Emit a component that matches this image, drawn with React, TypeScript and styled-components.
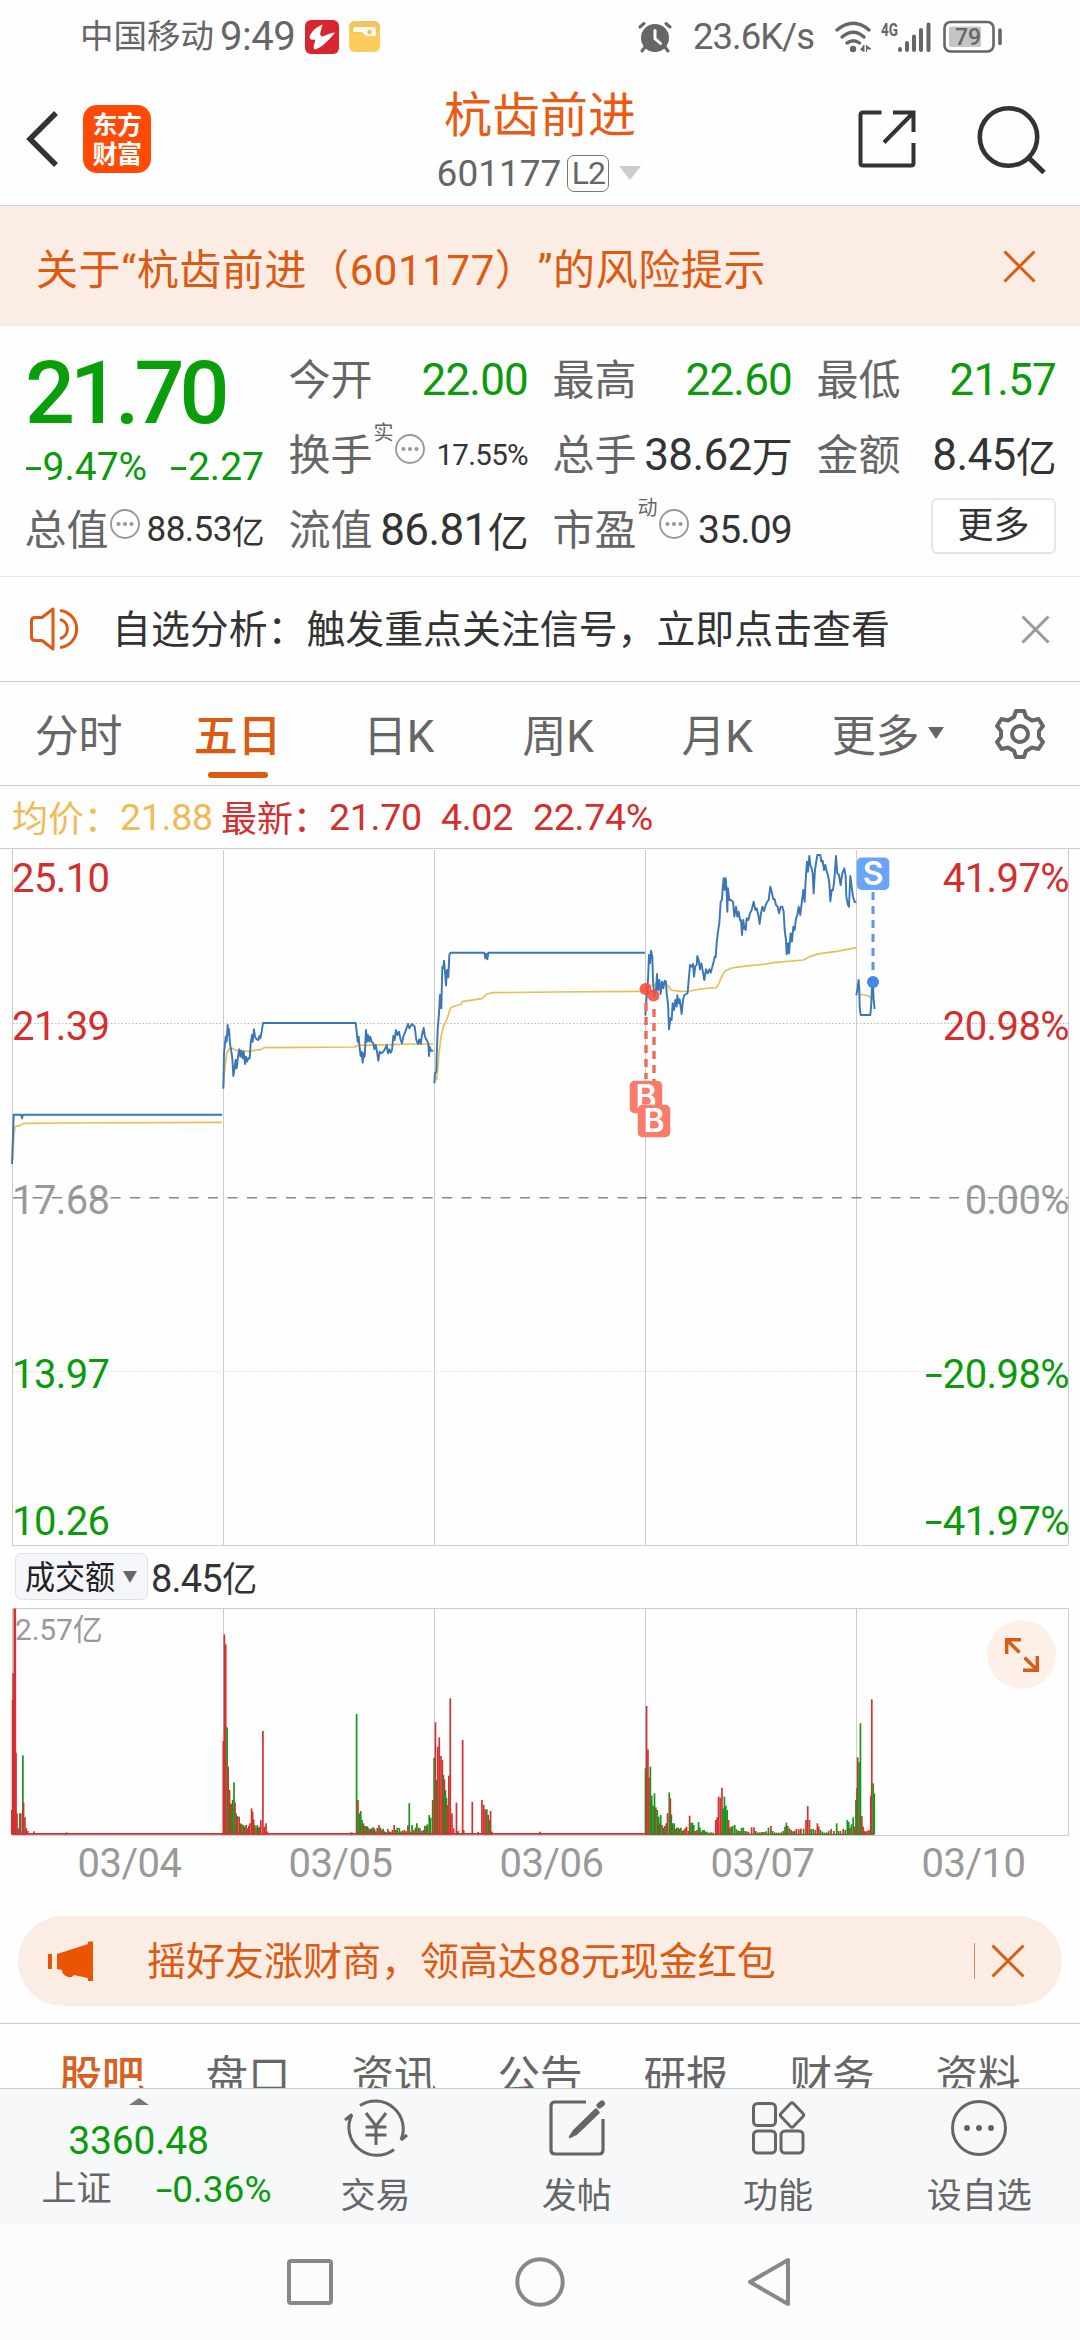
import React from 'react';
import styled, { createGlobalStyle } from 'styled-components';

const C = {
  green: '#0b9a0b',
  red: '#d32f2f',
  orange: '#dc5a12',
  gray: '#666',
  dark: '#333',
  light: '#999',
  line: '#ccc',
  peach: '#fcede4',
  blue: '#3a76b8',
  yellow: '#eebb55',
};

const Global = createGlobalStyle`
  * { box-sizing: border-box; }
  body { margin: 0; background: #fefefe; }
`;

const Page = styled.div`
  width: 1080px;
  height: 2340px;
  overflow: hidden;
  display: flex;
  flex-direction: column;
  background: #fefefe;
  color: ${C.dark};
  font-family: Roboto, 'Noto Sans CJK SC', sans-serif;
  text-spacing-trim: space-all;
  white-space: nowrap;
`;

const Text = styled.span<{ $size: number; $color?: string; $ls?: number; $weight?: number; $ml?: number }>`
  font-size: ${(p) => p.$size}px;
  color: ${(p) => p.$color ?? 'inherit'};
  letter-spacing: ${(p) => p.$ls ?? 0}px;
  font-weight: ${(p) => p.$weight ?? 400};
  margin-left: ${(p) => p.$ml ?? 0}px;
`;

/* A hyphen stretched to the width of a figure-style minus sign. */
const Minus = styled.span`
  display: inline-block;
  width: 0.45em;
  letter-spacing: 0;
  transform: scaleX(1.6);
  transform-origin: 0 50%;
`;

/* ---------- status bar ---------- */
const StatusBar = styled.div`
  height: 72px;
  flex: none;
  display: flex;
  align-items: center;
  justify-content: space-between;
  padding: 1px 77px 0 80px;
  color: ${C.gray};
`;
const StatusGroup = styled.div`
  display: flex;
  align-items: center;
  line-height: 40px;
`;
const StatusSvg = styled.svg<{ $ml: number }>`
  display: block;
  flex: none;
  margin-left: ${(p) => p.$ml}px;
`;

const AlarmIcon = () => (
  <StatusSvg $ml={0} width="34" height="32" viewBox="0 0 34 32">
    <g stroke={C.gray} strokeWidth="3" strokeLinecap="round" fill="none">
      <path d="M2 6 L6 2.5 M32 6 L28 2.5 M7 26 L4 30 M27 26 L30 30" />
    </g>
    <circle cx="17" cy="17" r="14" fill={C.gray} />
    <path d="M17 9.5 V17.5 L22.5 22.5" fill="none" stroke="#fff" strokeWidth="3" strokeLinecap="round" />
  </StatusSvg>
);
const WifiIcon = () => (
  <StatusSvg $ml={21} width="38" height="32" viewBox="0 0 38 32">
    <g fill="none" stroke={C.gray} strokeWidth="3.4" strokeLinecap="round">
      <path d="M2 9 Q18.500 -4.500 34 9" />
      <path d="M7 16 Q18.500 6.500 29 16" />
      <path d="M12 22 Q18.500 17.500 24.500 22" />
    </g>
    <circle cx="18" cy="28" r="3.200" fill={C.gray} />
    <path d="M25.500 29 L29 24 V31 M31.500 31 V24.500 L36 28 H32" fill={C.gray} stroke={C.gray} strokeWidth="1" />
  </StatusSvg>
);
const SignalIcon = () => (
  <StatusSvg $ml={8} width="50" height="32" viewBox="0 0 50 32">
    <text x="0" y="14.500" fontSize="18" fontWeight="700" textLength="17" lengthAdjust="spacingAndGlyphs" fill={C.gray} fontFamily="Roboto, sans-serif">4G</text>
    <g stroke={C.gray} strokeWidth="4" strokeLinecap="round">
      <path d="M19 28 V29 M26 22 V29 M33 15.500 V29 M40 9 V29 M47.500 3.500 V29" />
    </g>
  </StatusSvg>
);
const BatteryIcon = () => (
  <StatusSvg $ml={12} width="60" height="34" viewBox="0 0 60 34">
    <rect x="1.500" y="2" width="49" height="29.500" rx="6" fill="none" stroke={C.gray} strokeWidth="2.600" />
    <rect x="6" y="6.500" width="32" height="20.500" rx="2" fill="#c4c4c4" />
    <text x="25" y="25" textAnchor="middle" fontSize="23" fill={C.gray} fontWeight="500" fontFamily="Roboto, sans-serif">79</text>
    <path d="M57 10 V23.500" stroke={C.gray} strokeWidth="3.600" strokeLinecap="round" />
  </StatusSvg>
);
const StockBadge = () => (
  <StatusSvg $ml={10} width="34" height="34" viewBox="0 0 34 34">
    <rect width="34" height="34" rx="6" fill="#d7262f" />
    <path d="M17.500 4.500 C12 7 7 10 4.500 17 C5 20 7 20 10 19.500 C11 22 7 26 9.500 29.500 C14 29 22 23 30 12.500 C26 12.500 21 15.500 17 16.500 C13 15 17 9 17.500 4.500Z" fill="#fff" />
  </StatusSvg>
);
const FilesBadge = () => (
  <StatusSvg $ml={10} width="31" height="31" viewBox="0 0 31 31">
    <rect width="31" height="31" rx="6" fill="#fbcb5c" />
    <rect y="0" width="31" height="12" rx="6" fill="#f3c35d" />
    <path d="M4 8.500 Q4 6 6.500 6 H24 Q27 6 27 9 V15 H19 Q16 15 14.500 12.500 Q13.500 11 11.500 11 H4Z" fill="#fffaf0" />
    <circle cx="20.500" cy="11" r="2.200" fill="#f0bc4c" />
  </StatusSvg>
);

/* ---------- header ---------- */
const Header = styled.header`
  height: 134px;
  flex: none;
  display: grid;
  grid-template-columns: 300px 1fr 300px;
  border-bottom: 1px solid ${C.line};
`;
const HeaderSide = styled.div<{ $right?: boolean }>`
  display: flex;
  align-items: center;
  justify-content: ${(p) => (p.$right ? 'flex-end' : 'flex-start')};
  padding: 0 ${(p) => (p.$right ? 34 : 0)}px 0 ${(p) => (p.$right ? 0 : 25)}px;
  gap: ${(p) => (p.$right ? 60 : 24)}px;
  svg { display: block; }
`;
const Logo = styled.div`
  width: 68px;
  height: 68px;
  border-radius: 14px;
  background: #ff4a05;
  color: #fff;
  display: grid;
  place-content: center;
  padding-bottom: 2px;
  font: 700 25px/29px 'Noto Sans CJK SC', sans-serif;
  letter-spacing: -0.5px;
  text-align: center;
`;
const HeaderTitle = styled.div`
  display: flex;
  flex-direction: column;
  align-items: center;
  padding-top: 14px;
`;
const StockName = styled.div`
  font-size: 48px;
  line-height: 60px;
  color: #ea5a12;
`;
const CodeRow = styled.div`
  display: flex;
  align-items: center;
  height: 38px;
  margin: 8px 2px 0 0;
  color: ${C.gray};
`;
const LevelTag = styled.span`
  width: 42px;
  height: 37px;
  margin-left: 6px;
  border: 1.500px solid #777;
  border-radius: 7px;
  font-size: 32px;
  line-height: 35px;
  text-align: center;
  letter-spacing: -1px;
`;
const Caret = styled.span<{ $w: number; $h: number; $color: string; $ml?: number; $up?: boolean }>`
  width: 0;
  height: 0;
  flex: none;
  margin-left: ${(p) => p.$ml ?? 0}px;
  border-left: ${(p) => p.$w / 2}px solid transparent;
  border-right: ${(p) => p.$w / 2}px solid transparent;
  ${(p) => (p.$up ? 'border-bottom' : 'border-top')}: ${(p) => p.$h}px solid ${(p) => p.$color};
`;

/* ---------- risk notice ---------- */
const Risk = styled.div`
  height: 120px;
  flex: none;
  display: flex;
  align-items: center;
  justify-content: space-between;
  padding: 0 44px 0 36px;
  background: ${C.peach};
  color: ${C.orange};
  font-size: 42px;
  letter-spacing: 0.6px;
`;
const Cross = ({ size, color, w = 3 }: { size: number; color: string; w?: number }) => (
  <svg width={size} height={size} viewBox={`0 0 ${size} ${size}`} display="block">
    <path d={`M1.500 1.500 L${size - 1.5} ${size - 1.5} M${size - 1.5} 1.500 L1.500 ${size - 1.5}`} stroke={color} strokeWidth={w} fill="none" />
  </svg>
);

/* ---------- quote ---------- */
const Quote = styled.section`
  height: 251px;
  flex: none;
  display: grid;
  grid-template-columns: repeat(4, 239px);
  column-gap: 25px;
  padding: 16px 24px 0 25px;
  border-bottom: 1px solid #e8e8e8;
`;
const QuoteCol = styled.div`
  display: flex;
  flex-direction: column;
`;
const Price = styled.div`
  height: 100px;
  line-height: 102px;
  font-size: 88px;
  font-weight: 500;
  letter-spacing: -5px;
  color: #0a9f0a;
`;
const Change = styled.div`
  height: 50px;
  display: flex;
  align-items: center;
  justify-content: space-between;
  font-size: 39px;
  color: ${C.green};
`;
const Cell = styled.div`
  height: 75px;
  display: flex;
  align-items: center;
  justify-content: space-between;
`;
const Label = styled.span`
  display: flex;
  align-items: center;
  margin: 0 0 7px -0.5px;
  font-size: 42px;
  color: ${C.gray};
`;
const Sup = styled.sup`
  font-size: 20px;
  line-height: 20px;
  margin: -36px 0 0 1px;
`;
const Value = styled.span<{ $size?: number; $up?: boolean; $ls?: number }>`
  display: flex;
  align-items: center;
  font-size: ${(p) => p.$size ?? 44}px;
  letter-spacing: ${(p) => p.$ls ?? -0.8}px;
  color: ${(p) => (p.$up ? C.green : C.dark)};
`;
const Unit = styled.span`
  font-size: 0.93em;
`;
const MoreButton = styled.button`
  align-self: flex-end;
  width: 125px;
  height: 56px;
  margin-top: 6px;
  padding: 0;
  border: 2px solid #e6e6e6;
  border-radius: 6px;
  background: #fff;
  color: ${C.dark};
  font: 400 36px/50px Roboto, 'Noto Sans CJK SC', sans-serif;
`;
const InfoSvg = styled.svg`
  display: block;
  margin-top: -4px;
`;
const InfoDot = () => (
  <InfoSvg width="32" height="32" viewBox="0 0 32 32">
    <circle cx="16" cy="16" r="14" fill="none" stroke="#999" strokeWidth="1.900" />
    <g fill="#999">
      <circle cx="9.500" cy="16" r="2.100" />
      <circle cx="16" cy="16" r="2.100" />
      <circle cx="22.500" cy="16" r="2.100" />
    </g>
  </InfoSvg>
);

/* ---------- analysis notice ---------- */
const Notice = styled.div`
  height: 105px;
  flex: none;
  display: flex;
  align-items: center;
  padding: 0 30px 0 29px;
  border-bottom: 1px solid ${C.line};
  font-size: 38.900px;
`;
const NoticeText = styled.span`
  flex: 1;
  margin: 0 0 7px 29px;
`;

/* ---------- period tabs ---------- */
const Tabs = styled.nav`
  height: 104px;
  flex: none;
  display: flex;
  align-items: center;
  border-bottom: 1px solid ${C.line};
  color: ${C.gray};
`;
const Tab = styled.div<{ $w: number; $active?: boolean }>`
  position: relative;
  width: ${(p) => p.$w}px;
  height: 100%;
  display: flex;
  align-items: center;
  justify-content: center;
  font-size: 44px;
  padding-bottom: 2px;
  letter-spacing: -0.2px;
  color: ${(p) => (p.$active ? C.orange : 'inherit')};
  font-weight: ${(p) => (p.$active ? 500 : 400)};
  &::after {
    content: '';
    display: ${(p) => (p.$active ? 'block' : 'none')};
    position: absolute;
    left: 50%;
    bottom: 7px;
    width: 60px;
    height: 6px;
    margin-left: -30px;
    border-radius: 3px;
    background: ${C.orange};
  }
`;
const GearSvg = styled.svg`
  display: block;
  margin-left: 14px;
`;

/* ---------- price chart ---------- */
const Legend = styled.div`
  height: 62px;
  flex: none;
  display: flex;
  align-items: center;
  padding-left: 12px;
  color: ${C.red};
  font-size: 37.500px;
`;
const LegendItem = styled.span<{ $w: number; $color?: string }>`
  width: ${(p) => p.$w}px;
  letter-spacing: -0.3px;
  color: ${(p) => p.$color ?? 'inherit'};
`;
const LegendLabel = styled.span<{ $w: number; $color?: string }>`
  width: ${(p) => p.$w}px;
  margin-bottom: 2px;
  font-size: 36px;
  color: ${(p) => p.$color ?? 'inherit'};
`;
const Chart = styled.div`
  position: relative;
  height: 698px;
  flex: none;
  svg { display: block; }
`;
const Axis = styled.div<{ $right?: boolean }>`
  position: absolute;
  top: 10px;
  bottom: 1px;
  ${(p) => (p.$right ? 'right: 11px' : 'left: 12px')};
  display: flex;
  flex-direction: column;
  align-items: ${(p) => (p.$right ? 'flex-end' : 'flex-start')};
`;
const Tick = styled.div<{ $tone: 'red' | 'green' | 'light'; $gap?: number }>`
  height: 42px;
  line-height: 42px;
  margin-top: ${(p) => p.$gap ?? 0}px;
  font-size: 40px;
  letter-spacing: -0.6px;
  color: ${(p) => C[p.$tone]};
`;

const dayLines = [223.5, 434.5, 645.5, 856.5];

const price = [
  '36,972 41,824 63,824 66,835 69,824 666,824',
  '670,746 672,640 675,610 677,590 680,605 683,555 686,585 687,567 690,612 693,628 697,655 700,708 703,690 707,660 710,685 714,650 718,628 721,650 724,632 728,655 731,635 735,672 738,650 741,665 745,655 749,655 752,610 756,585 758,605 762,568 765,590 770,598 775,600 778,588 781,595 785,575 789,549 1067,549 1070,575 1073,605 1076,590 1079,625 1082,648 1085,635 1088,668 1091,640 1094,650 1098,570 1101,605 1104,585 1108,605 1111,590 1115,605 1120,610 1123,628 1127,615 1131,635 1135,662 1139,635 1144,640 1150,635 1156,625 1160,615 1164,640 1168,628 1172,638 1176,630 1180,588 1184,600 1188,570 1192,585 1197,575 1202,600 1206,610 1210,590 1216,575 1224,552 1228,565 1236,552 1244,560 1249,600 1254,612 1258,598 1262,612 1266,585 1271,564 1275,590 1280,600 1285,610 1287,648 1289,620 1293,632 1300,632',
  '1303,730 1305,700 1309,695 1310,650 1313,570 1317,520 1320,465 1324,505 1326,420 1327,380 1330,385 1332,362 1335,395 1338,436 1341,390 1345,412 1348,345 1352,338 1453,338 1456,355 1459,342 1462,358 1465,338 1935,338',
  '1936,527 1940,470 1944,420 1947,345 1950,370 1953,332 1957,350 1959,420 1963,470 1968,450 1971,402 1974,450 1978,420 1982,462 1986,425 1990,445 1994,422 1998,425 2000,460 2004,490 2007,568 2011,535 2015,540 2018,490 2022,510 2026,480 2030,500 2032,466 2036,490 2039,478 2042,500 2045,522 2049,480 2053,465 2059,462 2063,458 2067,410 2070,375 2075,380 2079,372 2082,410 2086,378 2090,375 2092,348 2096,360 2100,388 2104,370 2108,392 2113,420 2118,388 2123,400 2128,388 2132,398 2137,380 2141,365 2144,350 2147,352 2150,310 2154,275 2158,250 2162,185 2166,180 2168,145 2171,115 2174,150 2177,115 2180,150 2182,215 2184,145 2188,180 2193,180 2199,185 2203,230 2208,200 2212,230 2216,215 2220,240 2223,240 2226,285 2230,240 2233,265 2237,270 2240,235 2245,240 2250,220 2255,210 2261,185 2266,210 2270,205 2275,225 2279,252 2283,220 2287,200 2292,213 2297,195 2302,185 2306,180 2311,140 2316,160 2320,178 2324,178 2328,195 2333,200 2337,220 2342,200 2347,200 2351,215 2354,270 2358,300 2360,343 2364,310 2367,340 2372,280 2376,305 2380,260 2384,270 2388,235 2392,225 2396,200 2401,225 2405,190 2410,150 2414,185 2417,120 2421,65 2424,95 2428,48 2431,75 2435,85 2438,100 2441,160 2445,90 2448,70 2452,45 2461,45 2464,65 2468,62 2472,90 2476,75 2480,95 2484,105 2488,130 2491,184 2495,150 2499,150 2503,120 2508,48 2512,100 2517,105 2522,135 2527,100 2533,85 2537,110 2539,170 2544,195 2547,200 2551,108 2555,140 2559,170 2564,186 2569,186',
  '2569,466 2572,450 2576,420 2578,450 2579,500 2582,525 2611,525 2614,490 2616,440 2619,430 2621,480 2624,507',
];
const average = [
  '38,960 42,880 46,860 62,856 70,850 200,849 666,847',
  '670,740 674,690 680,640 688,627 697,625 710,632 745,634 785,628 792,623 900,622 1065,621 1072,616 1180,614 1230,612 1300,612',
  '1303,722 1310,718 1313,690 1317,640 1323,590 1330,560 1340,540 1348,515 1352,503 1365,498 1385,492 1387,485 1410,481 1445,476 1460,462 1480,458 1660,456 1935,454',
  '1936,500 1942,450 1950,435 1958,438 1970,430 1995,432 2005,438 2013,450 2040,454 2070,453 2100,447 2148,443 2155,435 2165,410 2176,392 2195,384 2230,379 2300,372 2320,368 2410,360 2420,355 2430,349 2460,341 2510,334 2569,323',
  '2580,463 2595,465 2610,470 2615,478',
];

const Marker = ({ x, y, fill, label }: { x: number; y: number; fill: string; label: string }) => (
  <g>
    <rect x={x} y={y} width="32.500" height="32.500" rx="5" fill={fill} />
    <text x={x + 16.25} y={y + 27.5} textAnchor="middle" fontSize="32" fontWeight="600" fill="#fff" fontFamily="Inter, sans-serif">
      {label}
    </text>
  </g>
);

const PriceChart = () => (
  <svg width="1080" height="698" viewBox="0 848 1080 698">
    <g stroke={C.line} strokeWidth="1" fill="none">
      <path d="M0 848.500 H1080 M12.500 848 V1545.500 H1068.500 V848" />
      {dayLines.map((x) => (
        <path key={x} d={`M${x} 850 V1545`} />
      ))}
      <path d="M13 1023.500 H1068" strokeDasharray="1.500 2" stroke="#bbb" />
      <path d="M13 1371.500 H1068" strokeDasharray="1.500 2" stroke="#ddd" />
    </g>
    <g transform="translate(0 840) scale(0.33333)" fill="none" strokeLinejoin="round">
      {average.map((d) => (
        <polyline key={d.slice(0, 9)} points={d} stroke={C.yellow} strokeWidth="5" />
      ))}
      {price.map((d) => (
        <polyline key={d.slice(0, 9)} points={d} stroke={C.blue} strokeWidth="5.800" />
      ))}
    </g>
    <g stroke="#ee6b5c" strokeWidth="3.400" strokeDasharray="8 6" fill="none">
      <path d="M646 1003 V1079" />
      <path d="M654 1009 V1103" />
    </g>
    <circle cx="645.500" cy="989" r="6" fill="#f5503f" opacity=".9" />
    <circle cx="653.500" cy="995.500" r="6" fill="#f5503f" opacity=".9" />
    <Marker x={629.7} y={1080.7} fill="#f97b6c" label="B" />
    <Marker x={637.7} y={1104.7} fill="#f97b6c" label="B" />
    <path d="M873 892 V976" stroke="#5b98e6" strokeWidth="3" strokeDasharray="8 6" />
    <circle cx="873" cy="982" r="6" fill="#4287ee" />
    <Marker x={856.8} y={857.5} fill="#68a4f8" label="S" />
  </svg>
);

const ZeroLine = styled.svg`
  position: absolute;
  left: 0;
  top: 0;
`;

/* ---------- volume ---------- */
const VolumeHead = styled.div`
  height: 62px;
  flex: none;
  display: flex;
  align-items: center;
  padding: 0 0 1px 15px;
`;
const Chip = styled.div`
  width: 133px;
  height: 47px;
  display: flex;
  align-items: center;
  padding-left: 9px;
  border: 1px solid #dfe2e6;
  border-radius: 7px;
  background: #f5f6fa;
  color: #222;
`;
const ChipText = styled.span`
  width: 90px;
  margin-bottom: 3px;
  font-size: 33px;
  transform: scaleX(0.91);
  transform-origin: 0 50%;
`;
const VolumeBox = styled.div`
  position: relative;
  height: 228px;
  flex: none;
  svg { display: block; }
`;
const VolumeMax = styled.span`
  position: absolute;
  left: 15px;
  top: 3px;
  font-size: 30px;
  line-height: 38px;
  letter-spacing: -0.2px;
  color: ${C.light};
`;
const Expand = styled.button`
  position: absolute;
  right: 24px;
  top: 12px;
  width: 69px;
  height: 69px;
  padding: 0;
  border: 0;
  border-radius: 50%;
  background: #fef0e8;
  display: grid;
  place-items: center;
`;
const Dates = styled.div`
  height: 80px;
  flex: none;
  display: grid;
  grid-template-columns: repeat(5, 211px);
  padding: 4px 0 0 24px;
  font-size: 40px;
  line-height: 48px;
  text-align: center;
  letter-spacing: -0.5px;
  color: ${C.light};
`;

const volume =
  'r34,840 r36,510 r38,430 r41,236 r44,236 r46,668 r49,850 r52,895 g57,850 r60,850 g66,676 r68,818 r72,862 r76,895 r80,903 r98,904 r193,907 ' +
  'r648,633 r651,313 r655,343 g659,592 r662,710 r666,780 g668,820 r671,822 g675,810 g679,757 r682,817 g685,850 r689,858 r694,860 g698,880 r702,883 g706,885 r710,890 r714,885 g718,895 r722,888 r725,880 r730,835 r733,845 r736,868 g739,885 r743,890 g747,885 g751,893 r754,890 r757,870 r763,603 r767,890 r772,880 r776,905 ' +
  'r1018,907 r1022,908 g1035,552 r1039,810 g1043,850 g1047,843 g1051,870 r1055,880 r1059,888 g1063,888 g1067,890 r1071,896 g1075,897 r1079,895 g1083,892 g1087,896 r1091,904 r1095,894 r1100,885 g1104,893 r1108,900 g1112,896 r1116,904 r1120,906 g1126,897 r1130,904 g1134,906 r1139,900 r1144,885 g1149,900 g1153,893 g1159,894 r1164,904 g1169,902 r1174,900 r1179,904 r1184,886 g1188,820 r1192,905 g1196,885 r1201,900 g1206,893 g1210,880 r1215,893 g1219,895 r1224,903 g1229,900 g1233,888 r1237,887 g1241,883 g1246,855 g1250,863 r1256,810 ' +
  'g1260,683 r1264,577 g1268,750 r1271,650 r1275,622 r1280,678 r1284,690 g1287,735 r1290,748 g1293,780 g1296,803 r1299,825 r1303,737 r1307,505 r1312,850 r1317,895 r1325,818 r1330,903 r1343,630 r1346,900 r1371,816 r1388,906 r1399,810 r1404,825 r1408,838 g1413,838 r1417,855 g1420,870 r1424,843 r1428,905 r1568,905 ' +
  'g1874,715 r1877,528 r1881,658 r1884,743 g1888,710 g1892,797 g1896,827 g1900,790 r1904,832 g1908,840 g1912,860 r1915,880 g1918,855 r1922,885 g1926,893 r1930,888 g1934,880 r1938,850 g1943,787 r1946,805 g1949,853 g1953,880 g1957,880 r1961,897 g1965,893 r1969,893 g1973,897 g1977,893 r1981,903 g1985,900 r1989,895 r1993,890 r1998,903 r2002,857 g2006,878 g2010,878 g2014,885 r2018,903 r2023,900 g2028,876 g2032,893 r2036,905 g2040,900 g2044,900 g2048,905 g2052,905 r2058,908 g2064,907 r2070,908 r2078,870 r2082,862 r2086,800 r2091,803 r2096,773 g2099,835 g2103,800 g2107,827 g2111,840 r2115,870 g2119,893 r2123,890 g2127,888 g2133,885 g2138,898 g2143,902 r2148,903 g2153,893 g2158,893 g2163,903 r2168,904 r2173,906 r2182,892 r2189,892 g2194,903 g2200,907 r2206,907 g2212,906 r2218,906 g2224,904 g2231,893 r2238,888 g2243,903 g2249,907 g2255,908 g2261,908 r2268,907 g2274,903 g2279,890 g2283,878 r2287,888 g2292,895 r2297,900 g2302,904 r2307,903 r2312,897 r2319,898 r2325,896 g2333,896 r2340,870 r2345,828 r2350,870 g2355,897 g2361,897 r2367,900 r2373,880 r2377,890 g2382,900 g2388,905 g2394,908 r2400,907 g2406,902 r2413,897 r2421,903 g2429,880 g2434,903 r2440,903 r2448,897 g2454,900 g2460,870 g2464,876 r2468,893 g2472,883 g2477,862 r2481,890 g2485,810 g2488,775 ' +
  'r2490,682 g2494,697 g2498,580 r2502,858 r2506,890 r2510,903 r2514,905 r2518,903 r2523,900 r2528,797 r2531,508 g2535,760 g2538,790';

const bars = volume.split(' ').map((token) => {
  const [x, y] = token.slice(1).split(',').map(Number);
  return { x: x / 2.9037, y: 1530 + y / 3, fill: token[0] === 'r' ? '#d63030' : '#15951a' };
});

const VolumeChart = () => (
  <svg width="1080" height="228" viewBox="0 1608 1080 228">
    <g stroke={C.line} strokeWidth="1" fill="none">
      <path d="M12.500 1608.500 H1068.500 V1835.500 H12.500 Z" />
      {dayLines.map((x) => (
        <path key={x} d={`M${x} 1609 V1835`} />
      ))}
    </g>
    {bars.map((b, i) => (
      <rect key={i} x={b.x - 0.7} y={b.y} width="1.700" height={1834.5 - b.y} fill={b.fill} />
    ))}
    <path d="M12 1833.800 H646" stroke="#c93030" strokeWidth="1.800" />
    <path d="M646 1834.300 H874" stroke="#6d6a1c" strokeWidth="1.200" />
  </svg>
);

/* ---------- promo ---------- */
const Promo = styled.div`
  height: 90px;
  flex: none;
  margin: 0 18px 17px;
  padding: 0 37px 0 29px;
  display: flex;
  align-items: center;
  border-radius: 45px;
  background: ${C.peach};
  color: ${C.orange};
  font-size: 39px;
`;
const PromoText = styled.span`
  flex: 1;
  margin: 0 0 6px 52px;
`;
const PromoDivider = styled.span`
  width: 1.500px;
  height: 36px;
  margin-right: 16px;
  background: #d98a5e;
`;

const InfoTabs = styled.nav`
  height: 65px;
  flex: none;
  overflow: hidden;
  display: grid;
  grid-template-columns: repeat(7, 146px);
  padding: 26px 29px 0;
  border-top: 1px solid ${C.line};
  font-size: 42.500px;
  line-height: 54px;
  text-align: center;
  color: ${C.gray};
`;
const InfoTab = styled.span<{ $active?: boolean }>`
  color: ${(p) => (p.$active ? '#d9601e' : 'inherit')};
  font-weight: ${(p) => (p.$active ? 500 : 400)};
`;

/* ---------- bottom bar ---------- */
const BottomBar = styled.footer`
  height: 136px;
  flex: none;
  display: grid;
  grid-template-columns: 275px repeat(4, 201.250px);
  border-top: 1px solid ${C.line};
  background: #f7f8fa;
  color: ${C.gray};
`;
const IndexBox = styled.div`
  display: flex;
  flex-direction: column;
  align-items: center;
  padding: 9px 0 0 2px;
`;
const IndexValue = styled.span`
  margin-top: 12px;
  font-size: 39px;
  line-height: 48px;
  letter-spacing: -0.2px;
  color: ${C.green};
`;
const IndexRow = styled.div`
  width: 230px;
  margin-left: 36px;
  display: flex;
  justify-content: space-between;
  align-items: center;
  font-size: 35px;
  line-height: 50px;
`;
const Action = styled.div`
  display: flex;
  flex-direction: column;
  align-items: center;
  padding-top: 7px;
  font-size: 35px;
  line-height: 44px;
  svg { display: block; margin-bottom: 15px; }
`;

const TradeIcon = () => (
  <svg width="66" height="64" viewBox="0 0 66 64" fill="none" stroke={C.gray} strokeWidth="3">
    <path d="M17 9.500 A28 28 0 0 1 58 44" />
    <path d="M51 53.500 A28 28 0 0 1 9 18.500 L2 24" />
    <path d="M58 44 L64 39" />
    <path d="M23 17 L33 30 L43 17 M33 30 V49 M22.500 31 H43.500 M22.500 39 H43.500" />
  </svg>
);
const PostIcon = () => (
  <svg width="64" height="64" viewBox="0 0 64 64" fill="none" stroke={C.gray}>
    <path d="M41 6 H10 Q6 6 6 10 V54 Q6 58 10 58 H54 Q58 58 58 54 V23" strokeWidth="3.200" />
    <path d="M51 13.500 L29 35 L25 41 L31 38 L53.500 16.500Z" fill={C.gray} strokeWidth="2.500" strokeLinejoin="round" />
    <path d="M54.500 9.500 L57 7.500" strokeWidth="6" strokeLinecap="round" />
  </svg>
);
const FeatureIcon = () => (
  <svg width="64" height="64" viewBox="0 0 64 64" fill="none" stroke={C.gray} strokeWidth="3">
    <rect x="7.500" y="7.500" width="22" height="22" rx="4" />
    <rect x="7.500" y="35" width="22" height="22" rx="4" />
    <rect x="35" y="35" width="22" height="22" rx="4" />
    <path d="M44.500 7.500 Q46 6 47.500 7.500 L57 17.500 Q58.500 19 57 20.500 L47.500 30.500 Q46 32 44.500 30.500 L35 20.500 Q33.500 19 35 17.500Z" />
  </svg>
);
const WatchIcon = () => (
  <svg width="64" height="64" viewBox="0 0 64 64">
    <circle cx="32" cy="32" r="26.500" fill="none" stroke={C.gray} strokeWidth="3" />
    <g fill={C.gray}>
      <circle cx="20" cy="32" r="3" />
      <circle cx="32" cy="32" r="3" />
      <circle cx="44" cy="32" r="3" />
    </g>
  </svg>
);

const SystemNav = styled.div`
  flex: 1;
  display: flex;
  justify-content: center;
  align-items: center;
  gap: 180px;
  background: #fcfcfc;
`;

export default function App() {
  return (
    <Page lang="zh-CN">
      <Global />
      <StatusBar>
        <StatusGroup>
          <Text $size={33.5}>中国移动</Text>
          <Text $size={40} $ml={6} $weight={400} $ls={-0.5}>9:49</Text>
          <StockBadge />
          <FilesBadge />
        </StatusGroup>
        <StatusGroup>
          <AlarmIcon />
          <Text $size={36.5} $ml={21} $ls={-1}>23.6K/s</Text>
          <WifiIcon />
          <SignalIcon />
          <BatteryIcon />
        </StatusGroup>
      </StatusBar>

      <Header>
        <HeaderSide>
          <svg width="34" height="58" viewBox="0 0 34 58" fill="none" stroke={C.dark} strokeWidth="5.500">
            <path d="M31 3 L5 29 L31 55" />
          </svg>
          <Logo>
            <span>东方</span>
            <span>财富</span>
          </Logo>
        </HeaderSide>
        <HeaderTitle>
          <StockName>杭齿前进</StockName>
          <CodeRow>
            <Text $size={37}>601177</Text>
            <LevelTag>L2</LevelTag>
            <Caret $w={22} $h={14} $color="#ccc" $ml={10} />
          </CodeRow>
        </HeaderTitle>
        <HeaderSide $right>
          <svg width="58" height="58" viewBox="0 0 58 58" fill="none" stroke={C.dark} strokeWidth="4">
            <path d="M23.500 2.500 H5 Q2.500 2.500 2.500 5 V53 Q2.500 55.500 5 55.500 H53 Q55.500 55.500 55.500 53 V33" />
            <path d="M35 2.500 H55.500 V22 M55 3 L26 32.500" />
          </svg>
          <svg width="70" height="70" viewBox="0 0 70 70" fill="none" stroke={C.dark} strokeWidth="4.600">
            <circle cx="32.500" cy="33" r="28.700" />
            <path d="M53 54 L68 68.500" strokeWidth="5" />
          </svg>
        </HeaderSide>
      </Header>

      <Risk>
        <span>关于“杭齿前进（601177）”的风险提示</span>
        <Cross size={33} color={C.orange} />
      </Risk>

      <Quote>
        <QuoteCol>
          <Price>21.70</Price>
          <Change>
            <span><Minus>-</Minus>9.47%</span>
            <span><Minus>-</Minus>2.27</span>
          </Change>
          <Cell>
            <Label>总值<InfoDot /></Label>
            <Value $size={35} $ls={-0.5}>88.53<Unit>亿</Unit></Value>
          </Cell>
        </QuoteCol>
        <QuoteCol>
          <Cell><Label>今开</Label><Value $up>22.00</Value></Cell>
          <Cell><Label>换手<Sup>实</Sup><InfoDot /></Label><Value $size={29.5} $ls={-0.7}>17.55%</Value></Cell>
          <Cell><Label>流值</Label><Value $ls={-0.6}>86.81<Unit>亿</Unit></Value></Cell>
        </QuoteCol>
        <QuoteCol>
          <Cell><Label>最高</Label><Value $up>22.60</Value></Cell>
          <Cell><Label>总手</Label><Value $ls={-0.6}>38.62<Unit>万</Unit></Value></Cell>
          <Cell><Label>市盈<Sup>动</Sup><InfoDot /></Label><Value $size={39}>35.09</Value></Cell>
        </QuoteCol>
        <QuoteCol>
          <Cell><Label>最低</Label><Value $up>21.57</Value></Cell>
          <Cell><Label>金额</Label><Value $ls={-0.6}>8.45<Unit>亿</Unit></Value></Cell>
          <MoreButton>更多</MoreButton>
        </QuoteCol>
      </Quote>

      <Notice>
        <svg width="54" height="46" viewBox="0 0 54 46" fill="none" stroke={C.orange} strokeWidth="3">
          <path d="M24 3 V43 L13 34.500 H6 Q2.500 34.500 2.500 31 V15 Q2.500 11.500 6 11.500 H13 Z" strokeLinejoin="round" />
          <path d="M31 13.500 A9.800 9.800 0 0 1 31 32.500 M31 4.500 A18.600 18.600 0 0 1 31 41.500" />
        </svg>
        <NoticeText>自选分析：触发重点关注信号，立即点击查看</NoticeText>
        <Cross size={29} color="#999" />
      </Notice>

      <Tabs>
        <Tab $w={157}>分时</Tab>
        <Tab $w={161} $active>五日</Tab>
        <Tab $w={161}>日K</Tab>
        <Tab $w={158}>周K</Tab>
        <Tab $w={160}>月K</Tab>
        <Tab $w={182}>
          更多
          <Caret $w={16} $h={12} $color={C.gray} $ml={9} />
        </Tab>
        <GearSvg width="54" height="56" viewBox="0 0 54 56" fill="none" stroke={C.gray} strokeWidth="4" strokeLinejoin="round">
          <path d="M23 5 H31 L33 11 L39 14.500 L45.500 13 L50 20 L46 25 V31 L50 36 L45.500 43 L39 41.500 L33 45 L31 51 H23 L21 45 L15 41.500 L8.500 43 L4 36 L8 31 V25 L4 20 L8.500 13 L15 14.500 L21 11 Z" />
          <circle cx="27" cy="28" r="8" />
        </GearSvg>
      </Tabs>

      <Legend>
        <LegendLabel $w={108} $color={C.yellow}>均价：</LegendLabel>
        <LegendItem $w={101} $color={C.yellow}>21.88</LegendItem>
        <LegendLabel $w={108}>最新：</LegendLabel>
        <LegendItem $w={112}>21.70</LegendItem>
        <LegendItem $w={92}>4.02</LegendItem>
        <LegendItem $w={130}>22.74%</LegendItem>
      </Legend>

      <Chart>
        <PriceChart />
        <Axis>
          <Tick $tone="red">25.10</Tick>
          <Tick $tone="red" $gap={106}>21.39</Tick>
          <Tick $tone="light" $gap={132}>17.68</Tick>
          <Tick $tone="green" $gap={132}>13.97</Tick>
          <Tick $tone="green" $gap={105}>10.26</Tick>
        </Axis>
        <Axis $right>
          <Tick $tone="red">41.97%</Tick>
          <Tick $tone="red" $gap={106}>20.98%</Tick>
          <Tick $tone="light" $gap={132}>0.00%</Tick>
          <Tick $tone="green" $gap={132}><Minus>-</Minus>20.98%</Tick>
          <Tick $tone="green" $gap={105}><Minus>-</Minus>41.97%</Tick>
        </Axis>
        <ZeroLine width="1080" height="698" viewBox="0 848 1080 698">
          <path d="M13 1197.800 H1068" stroke="#888" strokeWidth="1.500" strokeDasharray="10 9.500" />
        </ZeroLine>
      </Chart>

      <VolumeHead>
        <Chip>
          <ChipText>成交额</ChipText>
          <Caret $w={15} $h={12} $color="#666" $ml={8} />
        </Chip>
        <Text $size={38} $ml={3} $ls={-0.8}>8.45<Unit>亿</Unit></Text>
      </VolumeHead>
      <VolumeBox>
        <VolumeChart />
        <VolumeMax>2.57亿</VolumeMax>
        <Expand>
          <svg width="36" height="36" viewBox="0 0 36 36" fill="none" stroke={C.orange} strokeWidth="3.400">
            <path d="M2.700 17 V2.700 H17 M3 3 L15.500 15.500" />
            <path d="M33.300 19 V33.300 H19 M33 33 L20.500 20.500" />
          </svg>
        </Expand>
      </VolumeBox>
      <Dates>
        <span>03/04</span>
        <span>03/05</span>
        <span>03/06</span>
        <span>03/07</span>
        <span>03/10</span>
      </Dates>

      <Promo>
        <svg width="48" height="42" viewBox="0 0 48 42" fill="#ea5504">
          <rect x="1" y="14" width="4" height="15" />
          <path d="M10 14 L41 4 V1.500 H46 V41 H41 V38 L27 35 Q24 39 19 36 Q15 34 15 30 L10 29 Z" />
        </svg>
        <PromoText>摇好友涨财商，领高达88元现金红包</PromoText>
        <PromoDivider />
        <Cross size={34} color={C.orange} />
      </Promo>

      <InfoTabs>
        <InfoTab $active>股吧</InfoTab>
        <InfoTab>盘口</InfoTab>
        <InfoTab>资讯</InfoTab>
        <InfoTab>公告</InfoTab>
        <InfoTab>研报</InfoTab>
        <InfoTab>财务</InfoTab>
        <InfoTab>资料</InfoTab>
      </InfoTabs>

      <BottomBar>
        <IndexBox>
          <Caret $w={20} $h={7} $color="#777" $up />
          <IndexValue>3360.48</IndexValue>
          <IndexRow>
            <span>上证</span>
            <Text $size={37} $color={C.green}><Minus>-</Minus>0.36%</Text>
          </IndexRow>
        </IndexBox>
        <Action><TradeIcon />交易</Action>
        <Action><PostIcon />发帖</Action>
        <Action><FeatureIcon />功能</Action>
        <Action><WatchIcon />设自选</Action>
      </BottomBar>

      <SystemNav>
        <svg width="50" height="50" viewBox="0 0 50 50" fill="none" stroke="#888" strokeWidth="4">
          <rect x="4" y="4" width="42" height="42" rx="2" />
        </svg>
        <svg width="50" height="50" viewBox="0 0 50 50" fill="none" stroke="#888" strokeWidth="4">
          <circle cx="25" cy="25" r="22.700" />
        </svg>
        <svg width="50" height="50" viewBox="0 0 50 50" fill="none" stroke="#888" strokeWidth="4" strokeLinejoin="round">
          <path d="M43 3 V47 L5 25 Z" />
        </svg>
      </SystemNav>
    </Page>
  );
}
